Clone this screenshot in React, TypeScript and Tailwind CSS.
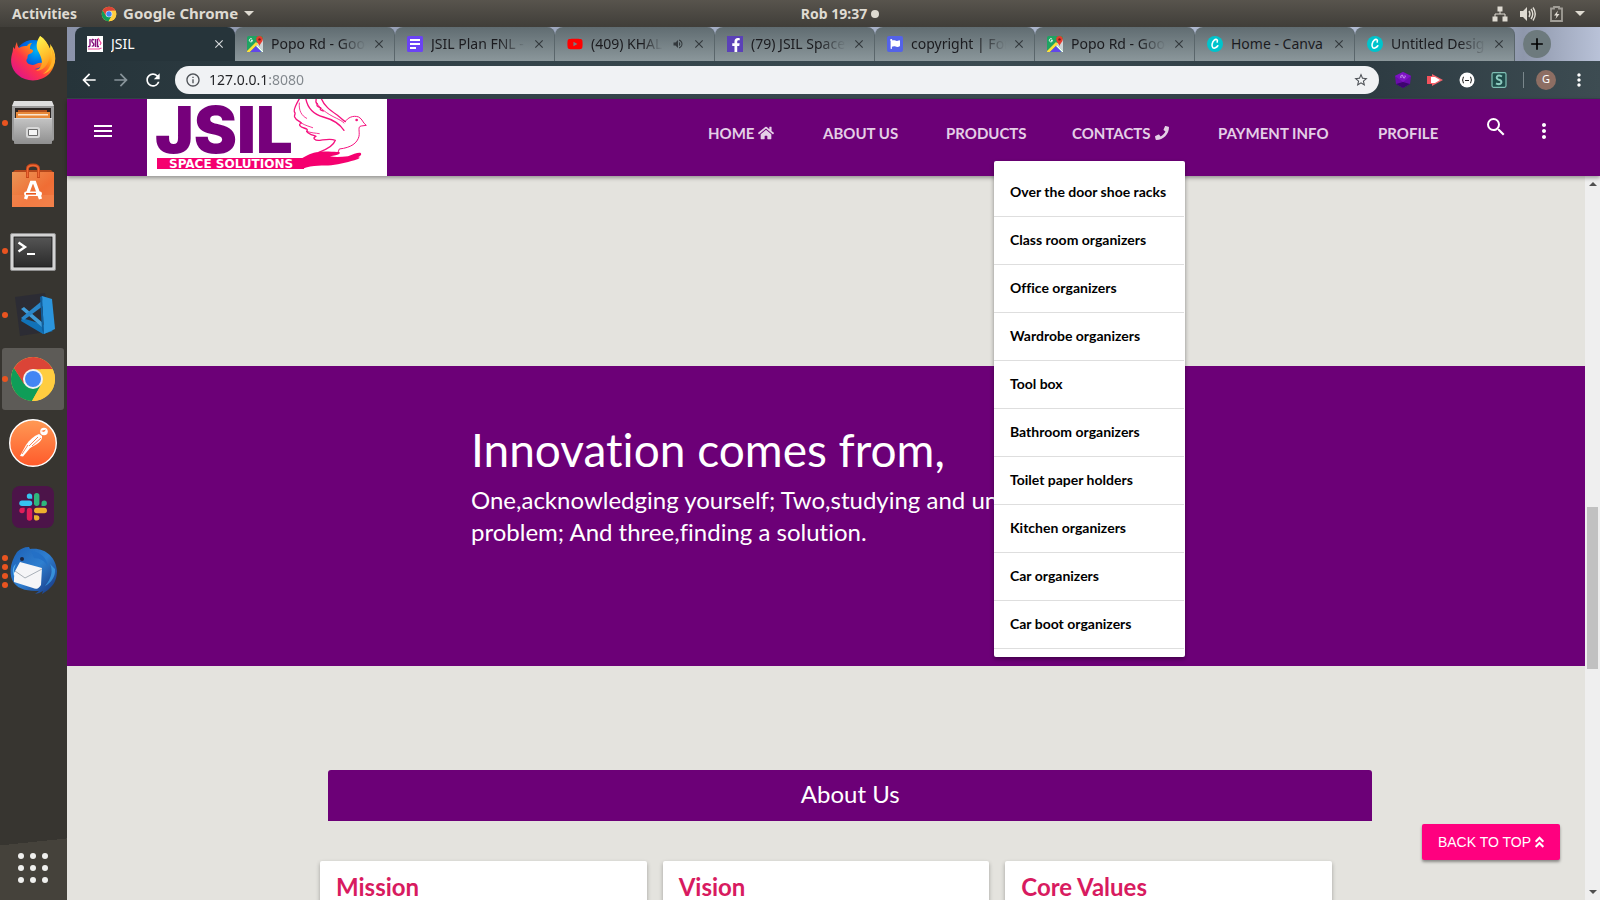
import type { ReactNode } from "react";
import { FaAngleDoubleUp, FaFacebookF, FaFlag, FaHome, FaPhone, FaYoutube } from "react-icons/fa";
import {
  MdAdd,
  MdArrowBack,
  MdArrowForward,
  MdClose,
  MdInfoOutline,
  MdMenu,
  MdMoreVert,
  MdRefresh,
  MdSearch,
  MdStarBorder,
  MdVolumeUp,
} from "react-icons/md";

/* ---------- Shared drawings ---------- */

function ChromeIcon({ className }: { className: string }) {
  return (
    <svg viewBox="0 0 48 48" className={className} aria-hidden="true">
      <circle cx="24" cy="24" r="22" fill="#ffcd40" />
      <path d="M4.95 13 A22 22 0 0 0 23 46 L32.5 29 L24 24 L15.5 29 Z" fill="#0f9d58" />
      <path d="M4.95 13 A22 22 0 0 1 43.7 14.2 L24 14.2 L15 29 Z" fill="#db4437" />
      <path d="M43.7 14.2 A22 22 0 0 1 23 46 L32.5 29 L32 14.2 Z" fill="#ffcd40" />
      <circle cx="24" cy="24" r="10" fill="#f1f1f1" />
      <circle cx="24" cy="24" r="8" fill="#4285f4" />
    </svg>
  );
}

function FirefoxIcon() {
  return (
    <svg viewBox="0 0 48 48" className="size-12" aria-hidden="true">
      <defs>
        <linearGradient id="ffBody" x1="0.9" y1="0.1" x2="0.15" y2="0.9">
          <stop offset="0" stopColor="#fff44f" />
          <stop offset="0.35" stopColor="#ff980e" />
          <stop offset="0.65" stopColor="#ff3647" />
          <stop offset="1" stopColor="#e31587" />
        </linearGradient>
        <linearGradient id="ffTail" x1="0.3" y1="0" x2="0.6" y2="1">
          <stop offset="0" stopColor="#fff44f" />
          <stop offset="0.6" stopColor="#ffbd2a" />
          <stop offset="1" stopColor="#ff8a1e" />
        </linearGradient>
        <radialGradient id="ffGlobe" cx="0.6" cy="0.3" r="0.8">
          <stop offset="0" stopColor="#00b3f4" />
          <stop offset="0.5" stopColor="#0060df" />
          <stop offset="1" stopColor="#2b2a8c" />
        </radialGradient>
      </defs>
      <circle cx="24" cy="23" r="18" fill="url(#ffGlobe)" />
      <path
        d="M8 7 C8 10 9 12 10 13 C13 11 16 11 18 11 C19 9 21 8 23 8 C21 10 21 12 21 14 C23 14 24 15 24 16 C24 18 20 19 19 20 C18 22 19 23 18 24 C16 26 19 30 24 30 C27 30 29 27 33 28 C38 29 30 34 25 34 C36 36 40 26 35 16 C33 12 32 6 31 1 C37 5 39 11 41 14 C42 13 42 11 41 9 C48 17 48 29 41 38 C33 47 18 48 9 40 C2 34 1 26 3 19 C4 16 4 14 4 12 C5 13 6 14 6 14 C6 11 7 9 8 7 Z"
        fill="url(#ffBody)"
      />
      <path
        d="M31 1 C27 7 27 12 29 16 C33 23 36 31 27 36 C38 35 40 26 42 17 C42 13 42 11 41 9 C41 11 41 13 41 14 C39 9 36 4 31 1 Z"
        fill="url(#ffTail)"
      />
      <path d="M42 13 C45 22 43 33 34 39 C42 37 47 29 46 22 C45 18 44 15 42 13 Z" fill="#ffb32a" />
    </svg>
  );
}

function FilesIcon() {
  return (
    <svg viewBox="0 0 48 48" className="size-12" aria-hidden="true">
      <defs>
        <linearGradient id="cabinet" x1="0" y1="0" x2="0" y2="1">
          <stop offset="0" stopColor="#c4c4c4" />
          <stop offset="1" stopColor="#8f8f8f" />
        </linearGradient>
      </defs>
      <rect x="3" y="6" width="42" height="36" rx="2" fill="#9c9c9c" />
      <path d="M5 2 H43 L45 7 H3 Z" fill="#dedede" />
      <rect x="6" y="9" width="36" height="12" fill="#2b2523" />
      <rect x="9" y="11" width="29" height="4" fill="#b5521f" />
      <rect x="7" y="13" width="34" height="7" fill="#e8893a" />
      <rect x="9" y="15" width="30" height="1.5" fill="#fbe6cf" />
      <rect x="5" y="19" width="38" height="26" rx="1" fill="url(#cabinet)" />
      <rect x="5" y="19" width="38" height="1" fill="#dadada" />
      <rect x="17" y="28" width="14" height="11" rx="2.5" fill="#d8d8d8" />
      <rect x="19" y="30" width="10" height="7" rx="1" fill="#6d6d6d" />
      <rect x="20" y="31" width="8" height="5" fill="#f4f4f4" />
    </svg>
  );
}

function SoftwareIcon() {
  return (
    <svg viewBox="0 0 48 48" className="size-12" aria-hidden="true">
      <defs>
        <linearGradient id="bag" x1="0" y1="0" x2="1" y2="1">
          <stop offset="0" stopColor="#eb9556" />
          <stop offset="0.6" stopColor="#f06d34" />
          <stop offset="1" stopColor="#f07a45" />
        </linearGradient>
      </defs>
      <path d="M4 9 L6 7 H42 L44 9 Z" fill="#b5481c" />
      <rect x="3" y="9" width="42" height="35" fill="url(#bag)" />
      <rect x="3" y="32" width="42" height="12" fill="#f3854f" opacity="0.6" />
      <path d="M18.5 15 V6 Q18.5 2 24 2 Q29.5 2 29.5 6 V15" fill="none" stroke="#c9471b" strokeWidth="3" />
      <path d="M18.5 14 V6 Q18.5 2.5 24 2.5 Q29.5 2.5 29.5 6 V14" fill="none" stroke="#ee6a35" strokeWidth="1.3" />
      <path d="M16.5 36 L22.5 19.5 H25.5 L31.5 36" fill="none" stroke="#fff" strokeWidth="3.4" />
      <rect x="15" y="28.5" width="18" height="4.5" rx="2.2" fill="#fff" />
      <rect x="17" y="30" width="10" height="1.6" fill="#e9581c" />
    </svg>
  );
}

function TerminalIcon() {
  return (
    <svg viewBox="0 0 48 48" className="size-12" aria-hidden="true">
      <defs>
        <linearGradient id="screen" x1="0" y1="0" x2="0" y2="1">
          <stop offset="0" stopColor="#555" />
          <stop offset="1" stopColor="#2a2a2a" />
        </linearGradient>
      </defs>
      <rect x="1.5" y="6.5" width="45" height="37" rx="1.5" fill="#d3d3d3" stroke="#8e8e8e" />
      <rect x="4" y="9" width="40" height="32" fill="#f0f0f0" />
      <rect x="5" y="10" width="38" height="30" fill="url(#screen)" stroke="#1c1c1c" />
      <path d="M9.5 15.5 L16 20 L9.5 24.5" fill="none" stroke="#fff" strokeWidth="2.4" />
      <path d="M18 27 H26" stroke="#fff" strokeWidth="2" />
    </svg>
  );
}

function CodeIcon() {
  return (
    <svg viewBox="0 0 48 48" className="size-12" aria-hidden="true">
      <path d="M6 6 L36 2 L43 40 L11 45 Z" fill="#2c2c34" />
      <path d="M13 27 L33 33 L44 40 L34 43 L12 30 Z" fill="#1172b8" />
      <path d="M12 18 L15 16 L34 32 V37 Z" fill="#3f9bd8" />
      <path d="M12 27 L34 9 V15 L15 29 Z" fill="#2a86c9" />
      <path d="M33 5 L43 8 L46 38 L35 43 Z" fill="#2b95dd" />
      <path d="M33 5 L35 43 L33 39 L31 6 Z" fill="#115e9c" />
    </svg>
  );
}

function PostmanIcon() {
  return (
    <svg viewBox="0 0 48 48" className="size-12" aria-hidden="true">
      <defs>
        <linearGradient id="postman" x1="0" y1="0" x2="0" y2="1">
          <stop offset="0" stopColor="#ff9a55" />
          <stop offset="1" stopColor="#ff5a2b" />
        </linearGradient>
      </defs>
      <circle cx="24" cy="24" r="23.3" fill="url(#postman)" stroke="#fff" strokeWidth="1.4" />
      <circle cx="35" cy="12.5" r="3.8" fill="#fff" />
      <path d="M32 12 L37 10.5 L35 13 Z" fill="#ff7d44" />
      <path d="M30 15 C25 17 20 21 17 26 L21 29 C27 26 34 22 33 17 Z" fill="#fff" />
      <path d="M17 26 L11 37 L14 37.5 L22 28 Z" fill="#fff" />
      <path d="M29 18 L20 27 M32 19 L23 27 M19 26 L13 35" stroke="#ff7540" strokeWidth="0.9" />
    </svg>
  );
}

function SlackIcon() {
  return (
    <svg viewBox="0 0 48 48" className="size-12" aria-hidden="true">
      <rect x="3" y="3" width="42" height="42" rx="8" fill="#4c1449" />
      <g strokeWidth="5.4" strokeLinecap="round">
        <path d="M13 20.3 H20.5" stroke="#36c5f0" />
        <path d="M27.7 12.7 V20.3" stroke="#2eb67d" />
        <path d="M20.5 27.5 V35" stroke="#e01e5a" />
        <path d="M27.7 27.5 H35.3" stroke="#ecb22e" />
      </g>
      <path d="M23.2 15.8 H20.5 A2.7 2.7 0 1 1 23.2 13 Z" fill="#36c5f0" />
      <path d="M32.5 23 V20.3 A2.7 2.7 0 1 1 35.3 23 Z" fill="#2eb67d" />
      <path d="M15.7 24.8 V27.5 A2.7 2.7 0 1 1 13 24.8 Z" fill="#e01e5a" />
      <path d="M25 32.2 H27.7 A2.7 2.7 0 1 1 25 35 Z" fill="#ecb22e" />
    </svg>
  );
}

function ThunderbirdIcon() {
  return (
    <svg viewBox="0 0 48 48" className="size-12" aria-hidden="true">
      <defs>
        <linearGradient id="bird" x1="0" y1="0" x2="1" y2="1">
          <stop offset="0" stopColor="#1c5fb5" />
          <stop offset="0.5" stopColor="#2f7fd0" />
          <stop offset="1" stopColor="#16317c" />
        </linearGradient>
      </defs>
      <path
        d="M8 5 C11 2 15 0 20 0 L21 2 C36 0 47 10 48 24 C48 30 46 37 41 41 L39 43 L33 47 C33 46 34 45 34 44 L30 46 L26 47 L30 44 C20 44 10 43 5 36 C0 29 0 17 8 5 Z"
        fill="url(#bird)"
      />
      <path d="M22 4 C32 5 38 11 39 20 C36 14 31 11 25 11 Z" fill="#2470c6" />
      <path d="M41 17 C44 23 43 31 36 39 C42 36 47 29 46 22 Z" fill="#3fa6ee" opacity="0.7" />
      <path d="M5 26 L11 15 L33 21 L32 38 C29 43 26 42 24 41 L5 35 Z" fill="#f5f5f7" />
      <path d="M6 24 L16 31 L33 22" fill="none" stroke="#a9b0b8" strokeWidth="1" />
      <circle cx="13" cy="12" r="2" fill="#1d2540" />
      <path d="M7 17 C5 21 4 26 6 31 C3 26 3 20 7 17 Z" fill="#5bb8f5" />
    </svg>
  );
}

function MapsIcon() {
  return (
    <svg viewBox="0 0 16 16" className="size-4 shrink-0" aria-hidden="true">
      <rect width="16" height="16" rx="1.5" fill="#1fa463" />
      <path d="M16 3 L16 15 L9 8 Z" fill="#cfd3d6" />
      <path d="M0 15 L9 6 L11 8 L3 16 H0 Z" fill="#ffe03a" />
      <path d="M3 16 L9 10 L14.5 16 Z" fill="#6246ea" />
      <path d="M10 9 L16 15 V16 H15 L9 10 Z" fill="#fff" />
      <path d="M12.5 10.5 C12.2 7.5 9.2 6.3 9.2 3.3 A3.3 3.3 0 0 1 15.8 3.3 C15.8 6.3 12.8 7.5 12.5 10.5 Z" fill="#e53c2e" />
      <circle cx="12.5" cy="3.4" r="1.2" fill="#7b1712" />
      <path d="M5.2 3.3 A1.6 1.6 0 1 0 5.5 4.5 H4" fill="none" stroke="#fff" strokeWidth="0.9" />
    </svg>
  );
}

function DocsIcon() {
  return (
    <svg viewBox="0 0 16 16" className="size-4 shrink-0" aria-hidden="true">
      <rect width="16" height="16" rx="1.5" fill="#6b43f5" />
      <path d="M3 4 H13 M3 8 H13 M3 12 H9" stroke="#fff" strokeWidth="1.8" />
    </svg>
  );
}

function CanvaIcon() {
  return (
    <svg viewBox="0 0 16 16" className="size-4 shrink-0" aria-hidden="true">
      <circle cx="8" cy="8" r="8" fill="#00c4cc" />
      <path
        d="M10.2 6 C11.2 3.4 8.8 2.6 7.2 4.2 C5 6.3 4.3 10.2 5.8 11.6 C7.3 12.8 9.6 11.7 10.8 9.8"
        fill="none"
        stroke="#fff"
        strokeWidth="1.6"
        strokeLinecap="round"
      />
    </svg>
  );
}

function DoveAndHand() {
  return (
    <g transform="translate(-7 -4) scale(0.3333)">
      <g fill="none" stroke="#f5127f" strokeWidth="4" strokeLinecap="round" strokeLinejoin="round">
        <path d="M480 8 C470 25 458 45 464 52 C468 56 462 60 464 66 C468 76 478 78 484 84 C474 88 480 96 492 99 C502 102 504 104 500 109 C506 118 518 120 528 124 C516 128 524 138 540 136 C556 134 572 130 586 136 C580 154 560 164 536 172" />
        <path d="M478 24 C476 46 484 62 500 70 M484 84 C496 92 508 94 518 98 M500 109 C514 114 526 114 538 116" strokeWidth="2.5" />
        <path d="M497 8 C502 40 520 58 550 66 C580 74 600 88 612 106" />
        <path d="M528 8 C530 18 524 24 532 26 C528 34 536 36 542 38 C538 46 546 46 550 48" />
        <path d="M543 8 C552 34 574 48 594 62 C604 70 610 76 616 80" />
        <path d="M529 22 C540 40 560 56 590 70 C600 75 606 78 612 84" strokeWidth="2.5" />
        <path d="M616 80 C622 68 640 60 656 66 C668 72 668 84 679 91 L664 93 C652 94 660 110 657 124 C652 144 634 158 598 162 L594 172" strokeWidth="3" />
      </g>
      <circle cx="650" cy="75" r="4" fill="#f5127f" />
      <path
        d="M486 190 C500 182 516 172 536 171 C560 168 580 172 598 171 C602 176 598 180 570 184 C586 188 604 186 624 184 C640 178 654 172 662 174 C666 178 662 184 652 187 C662 186 660 190 652 193 C630 200 600 208 574 211 C550 214 520 208 486 222 Z"
        fill="#f5006f"
      />
    </g>
  );
}

/* ---------- Desktop chrome ---------- */

function TopBar() {
  return (
    <header className="grid h-[27px] shrink-0 grid-cols-[1fr_auto_1fr] items-center bg-linear-to-b from-[#58544d] to-[#403e39] text-[14px] font-bold text-[#dfdbd2]">
      <div className="flex items-center">
        <button type="button" className="pl-3">Activities</button>
        <button type="button" className="flex items-center gap-[6px] pl-6 text-[15px]">
          <ChromeIcon className="size-4" />
          Google Chrome
          <svg viewBox="0 0 10 5" className="h-[5px] w-[10px]" aria-hidden="true">
            <path d="M0 0 H10 L5 5 Z" fill="#dfdbd2" />
          </svg>
        </button>
      </div>
      <button type="button" className="flex items-center gap-1 pl-20">
        Rob 19:37
        <span className="size-2 rounded-full bg-[#dfdbd2]" />
      </button>
      <div className="flex items-center justify-end pr-[15px]">
        <svg viewBox="0 0 80 16" className="mr-[3px] h-4 w-20" aria-hidden="true">
          <path d="M5.5 0.5 h5 v5 h-5 z M0.5 10.5 h5 v5 h-5 z M10.5 10.5 h5 v5 h-5 z" fill="#dfdbd2" />
          <path d="M8 5 V8 M3 11 V8 H13 V11" fill="none" stroke="#dfdbd2" />
          <path d="M28 5 H31 L35 1 V15 L31 11 H28 Z" fill="#dfdbd2" />
          <path d="M37 5 Q39 8 37 11 M39 3 Q42.5 8 39 13 M41 1.5 Q45.5 8 41 14.5" fill="none" stroke="#dfdbd2" strokeWidth="1.4" />
          <path d="M59 2.5 H62 V1 H67 V2.5 H70 V15 H59 Z" fill="none" stroke="#a19e97" strokeWidth="1.8" />
          <path d="M66 4.5 L62 9.5 H64.5 L63.5 13 L67.5 8 H65 Z" fill="#dfdbd2" />
        </svg>
        <svg viewBox="0 0 10 5" className="h-[5px] w-[10px]" aria-hidden="true">
          <path d="M0 0 H10 L5 5 Z" fill="#dfdbd2" />
        </svg>
      </div>
    </header>
  );
}

const dockApps: { name: string; icon: ReactNode; windows: number; active?: boolean }[] = [
  { name: "Firefox", icon: <FirefoxIcon />, windows: 0 },
  { name: "Files", icon: <FilesIcon />, windows: 1 },
  { name: "Ubuntu Software", icon: <SoftwareIcon />, windows: 0 },
  { name: "Terminal", icon: <TerminalIcon />, windows: 1 },
  { name: "Visual Studio Code", icon: <CodeIcon />, windows: 1 },
  { name: "Google Chrome", icon: <ChromeIcon className="size-12" />, windows: 1, active: true },
  { name: "Postman", icon: <PostmanIcon />, windows: 0 },
  { name: "Slack", icon: <SlackIcon />, windows: 0 },
  { name: "Thunderbird", icon: <ThunderbirdIcon />, windows: 4 },
];

function Dock() {
  return (
    <nav
      aria-label="Dock"
      className="flex w-[67px] shrink-0 flex-col bg-[#373530] bg-[linear-gradient(174deg,transparent_93%,#45423b_93%)]"
    >
      {dockApps.map((app) => (
        <div key={app.name} className="flex h-16 items-center pl-[2px]">
          <button
            type="button"
            aria-label={app.name}
            className={`relative flex h-[62px] w-[62px] items-center justify-center rounded-[3px] ${app.active ? "bg-[#5d5b57]" : ""}`}
          >
            {app.icon}
            <span className="absolute inset-y-0 left-0 flex flex-col justify-center gap-[3px]">
              {Array.from({ length: app.windows }, (_, i) => (
                <span key={i} className="size-[6px] rounded-full bg-[#e95420]" />
              ))}
            </span>
          </button>
        </div>
      ))}
      <button type="button" aria-label="Show Applications" className="mt-auto flex h-16 items-center justify-center pr-[2px]">
        <span className="grid grid-cols-3 gap-[6px]">
          {Array.from({ length: 9 }, (_, i) => (
            <span key={i} className="size-[6px] rounded-full bg-[#f0f0ee]" />
          ))}
        </span>
      </button>
    </nav>
  );
}

/* ---------- Browser ---------- */

const mapsTab = { title: "Popo Rd - Goog", icon: <MapsIcon /> };

const tabs: { title: string; icon: ReactNode; active?: boolean; audio?: boolean; fits?: boolean }[] = [
  {
    title: "JSIL",
    active: true,
    fits: true,
    icon: (
      <svg viewBox="0 0 16 16" className="size-4 shrink-0" aria-hidden="true">
        <rect width="16" height="16" fill="#fff" />
        <path d="M3 3 V9 Q3 11 1 10.5 M7 4 Q5 2.5 4.8 5 Q5 6.5 6.5 7.5 Q7.5 10.5 4.8 10 M8.5 3 V11 M10.5 3 V10.5 H12" fill="none" stroke="#85107c" strokeWidth="1.4" />
        <path d="M11 2 L14 7 L13 9 M1 13 H12 L14.5 12" fill="none" stroke="#f0459a" strokeWidth="1.2" />
      </svg>
    ),
  },
  mapsTab,
  { title: "JSIL Plan FNL -", icon: <DocsIcon /> },
  { title: "(409) KHAL", icon: <FaYoutube className="size-4 shrink-0 text-[#f00]" />, audio: true },
  {
    title: "(79) JSIL Space",
    icon: (
      <span className="flex size-4 shrink-0 items-end justify-end bg-[#5b41b8] text-white">
        <FaFacebookF className="size-[14px]" />
      </span>
    ),
  },
  {
    title: "copyright | Fon",
    icon: (
      <span className="flex size-4 shrink-0 items-center justify-center rounded-[2px] bg-[#5463e8] text-white">
        <FaFlag className="size-[10px]" />
      </span>
    ),
  },
  mapsTab,
  { title: "Home - Canva", icon: <CanvaIcon />, fits: true },
  { title: "Untitled Desig", icon: <CanvaIcon /> },
];

function TabStrip() {
  return (
    <div className="flex h-[34px] shrink-0 items-stretch bg-[linear-gradient(to_right,#8b93aa,#a3adc4_40%,#b3bdd4_90%,#8e97ab_95%,#b9c2d8)] pl-2 pr-[49px]">
      {tabs.map((tab, i) => (
        <div
          key={i}
          className={`flex min-w-0 flex-1 items-center rounded-t-lg border-r pl-3 pr-2 ${
            tab.active
              ? "border-[#26343a] bg-[#26343a] text-white"
              : "border-[#5a666b] bg-linear-to-b from-[#606c71] to-[#8b979b] text-[#1b1b1f]"
          }`}
        >
          {tab.icon}
          <button
            type="button"
            className={`ml-2 min-w-0 flex-1 overflow-hidden whitespace-nowrap text-left text-[14px] leading-5 ${
              tab.fits ? "" : "[mask-image:linear-gradient(to_right,#000_70%,transparent_98%)]"
            }`}
          >
            {tab.title}
          </button>
          {tab.audio && <MdVolumeUp className="ml-2 mr-1 size-3 shrink-0 text-[#33393d]" />}
          <button type="button" aria-label="Close tab" className={`ml-1 shrink-0 ${tab.active ? "text-[#d5d8da]" : "text-[#33393d]"}`}>
            <MdClose className="size-[14px]" />
          </button>
        </div>
      ))}
      <button
        type="button"
        aria-label="New tab"
        className="ml-2 flex size-7 shrink-0 items-center justify-center self-center rounded-full bg-[#6d7a7d] text-black"
      >
        <MdAdd className="size-5" />
      </button>
    </div>
  );
}

function Toolbar() {
  return (
    <div className="flex h-[38px] shrink-0 items-center border-b border-[#36464a] bg-[linear-gradient(to_right,#26343a,#34444a_30%,#3b4b51_60%,#2d3b42_85%,#3d4c52)] pr-[5px] text-white">
      <button type="button" aria-label="Back" className="ml-[6px] flex size-8 items-center justify-center">
        <MdArrowBack className="size-5" />
      </button>
      <button type="button" aria-label="Forward" className="flex size-8 items-center justify-center text-[#88949a]">
        <MdArrowForward className="size-5" />
      </button>
      <button type="button" aria-label="Reload" className="flex size-8 items-center justify-center">
        <MdRefresh className="size-5" />
      </button>
      <div className="ml-[6px] flex h-7 flex-1 items-center rounded-full bg-[#f0f2f4] px-[10px] text-[#4d5156]">
        <MdInfoOutline className="size-4" />
        <label htmlFor="address" className="sr-only">Address</label>
        <input
          id="address"
          type="text"
          defaultValue="127.0.0.1:8080"
          className="ml-2 min-w-0 flex-1 bg-[linear-gradient(to_right,#202124_60px,#80868b_60px)] bg-clip-text text-[14px] leading-5 text-transparent outline-none"
        />
        <button type="button" aria-label="Bookmark this page">
          <MdStarBorder className="size-4" />
        </button>
      </div>
      <div className="ml-2 flex items-center">
        <button type="button" aria-label="Gem extension" className="flex size-8 items-center justify-center">
          <svg viewBox="0 0 16 16" className="size-4" aria-hidden="true">
            <path d="M8 0 L16 4 L15 12 L8 16 L1 12 L0 4 Z" fill="#6a0dab" />
            <path d="M8 0 L16 4 L8 10 L0 4 Z" fill="#7d12c4" />
            <path d="M8 10 L15 12 L8 16 L1 12 Z" fill="#3d0570" />
            <path d="M6 6 C5 3 8 2 8 4.5 C8 7 11 6 10 3.5" fill="none" stroke="#e4c6ff" strokeWidth="0.8" />
          </svg>
        </button>
        <button type="button" aria-label="Record extension" className="flex size-8 items-center justify-center">
          <svg viewBox="0 0 16 16" className="size-4" aria-hidden="true">
            <rect x="0" y="4" width="9" height="8" fill="#f4525c" />
            <path d="M5 2 L16 8 L5 14 Z" fill="#f4646c" />
            <path d="M4 5 H8 L13 8 L8 11 H4 Z" fill="#fff" />
          </svg>
        </button>
        <button type="button" aria-label="JSON extension" className="flex size-8 items-center justify-center">
          <svg viewBox="0 0 16 16" className="size-4" aria-hidden="true">
            <circle cx="8" cy="8" r="7.5" fill="#fff" />
            <path d="M5 5 Q3.5 5 4 7 Q4 8 3 8 Q4 8 4 9 Q3.5 11 5 11 M11 5 Q12.5 5 12 7 Q12 8 13 8 Q12 8 12 9 Q12.5 11 11 11 M6 8.5 H10" fill="none" stroke="#222" />
          </svg>
        </button>
        <button type="button" aria-label="Stylus extension" className="flex size-8 items-center justify-center">
          <svg viewBox="0 0 16 16" className="size-4" aria-hidden="true">
            <rect x="1" y="0.7" width="14" height="14.6" rx="1.5" fill="#1f4a49" stroke="#7fc0b5" strokeWidth="1.2" />
            <path d="M11 4.5 Q7.5 2.5 6 4.5 Q5 7 8 7.8 Q11.5 9 10 11.2 Q8 13 5 11.3" fill="none" stroke="#8ccabf" strokeWidth="2" />
          </svg>
        </button>
        <span className="mx-2 h-4 w-px bg-[#7a878c]" />
        <button type="button" aria-label="Profile" className="ml-1 mr-[7px] flex size-5 items-center justify-center rounded-full bg-[#8d6e63] text-[11px] text-white">
          G
        </button>
        <button type="button" aria-label="Browser menu" className="flex size-8 items-center justify-center">
          <MdMoreVert className="size-5" />
        </button>
      </div>
    </div>
  );
}

/* ---------- Site ---------- */

const products = [
  "Over the door shoe racks",
  "Class room organizers",
  "Office organizers",
  "Wardrobe organizers",
  "Tool box",
  "Bathroom organizers",
  "Toilet paper holders",
  "Kitchen organizers",
  "Car organizers",
  "Car boot organizers",
];

const links: { label: string; icon?: ReactNode; width: string }[] = [
  { label: "HOME", icon: <FaHome className="size-4" />, width: "w-[115px]" },
  { label: "ABOUT US", width: "w-[123px]" },
  { label: "PRODUCTS", width: "w-[126px]" },
  { label: "CONTACTS", icon: <FaPhone className="size-[14px]" />, width: "w-[146px]" },
  { label: "PAYMENT INFO", width: "w-[160px]" },
  { label: "PROFILE", width: "w-[110px]" },
];

function SiteNav() {
  return (
    <nav className="relative z-10 flex h-[77px] shrink-0 items-start bg-[#6c0077] pr-10 text-white shadow-[0_2px_4px_rgba(0,0,0,0.35)]">
      <button type="button" aria-label="Open menu" className="ml-6 flex h-16 items-center">
        <MdMenu className="size-6" />
      </button>
      <a href="#home" aria-label="JSIL Space Solutions" className="ml-8">
        <svg viewBox="0 0 240 77" className="block h-[77px] w-[240px]">
          <rect width="240" height="77" fill="#fff" />
          <text x="8" y="54" fontSize="65" fontWeight="900" fill="#76007b" className="font-['Inter',sans-serif]">
            JSIL
          </text>
          <rect x="10" y="59" width="147" height="11" fill="#f5006f" />
          <DoveAndHand />
          <text x="22" y="69" fontSize="12" fontWeight="700" fill="#fff" className="font-['DejaVu_Sans',sans-serif]">
            SPACE SOLUTIONS
          </text>
        </svg>
      </a>
      <ul className="ml-auto flex text-[15px] font-bold text-[#e4cfe6]">
        {links.map((link) => (
          <li key={link.label} className={`relative ${link.width}`}>
            <a href="#section" className="flex h-16 items-center gap-1 whitespace-nowrap pl-6 pt-1">
              {link.label}
              {link.icon}
            </a>
            {link.label === "PRODUCTS" && (
              <ul className="absolute left-[72px] top-[62px] w-[191px] rounded-[2px] bg-white py-2 pr-px text-[14px] text-black shadow-[0_2px_4px_rgba(0,0,0,0.4)]">
                {products.map((product) => (
                  <li key={product} className="border-b border-[#dedede]">
                    <a href="#products" className="flex h-[47px] items-center whitespace-nowrap pb-[2px] pl-4">
                      {product}
                    </a>
                  </li>
                ))}
              </ul>
            )}
          </li>
        ))}
      </ul>
      <button type="button" aria-label="Search" className="flex h-14 w-16 items-center justify-center">
        <MdSearch className="size-6" />
      </button>
      <button type="button" aria-label="More" className="flex h-16 w-8 items-center justify-center">
        <MdMoreVert className="size-6" />
      </button>
    </nav>
  );
}

function SiteContent() {
  return (
    <main className="relative min-w-0 flex-1 overflow-hidden bg-[#e4e3de] pt-[190px]">
      <section className="h-[300px] bg-[#6c0077] pl-[404px] pt-[54px] text-white">
        <h1 className="text-[46px] leading-[60px]">Innovation comes from,</h1>
        <p className="mt-1 text-[24px] leading-8">
          One,acknowledging yourself; Two,studying and understanding the
          <br />
          problem; And three,finding a solution.
        </p>
      </section>
      <h2 className="ml-[17.2%] mt-[104px] h-[51px] w-[68.8%] rounded-t-[3px] bg-[#6c0077] text-center text-[24px] leading-[48px] text-white">
        About Us
      </h2>
      <div className="mx-auto mt-10 grid w-2/3 grid-cols-3 gap-4">
        {["Mission", "Vision", "Core Values"].map((title) => (
          <article key={title} className="h-40 rounded-[2px] bg-white px-4 pt-[10px] shadow-[0_2px_4px_rgba(0,0,0,0.3)]">
            <h3 className="text-[24px] font-bold leading-8 text-[#d81b60]">{title}</h3>
          </article>
        ))}
      </div>
      <button
        type="button"
        className="absolute bottom-10 right-[25px] flex h-9 items-center gap-1 rounded-[2px] bg-[#ff007f] px-4 font-['Liberation_Sans',sans-serif] text-[14px] text-white shadow-[0_2px_3px_rgba(0,0,0,0.4)]"
      >
        BACK TO TOP
        <FaAngleDoubleUp className="h-[14px] w-[9px]" />
      </button>
    </main>
  );
}

function ScrollTrack() {
  return (
    <div className="flex w-[15px] shrink-0 flex-col items-center bg-[#efefef] py-[6px]" aria-hidden="true">
      <svg viewBox="0 0 8 4" className="h-1 w-2"><path d="M0 4 L4 0 L8 4 Z" fill="#505050" /></svg>
      <span className="grow-[321]" />
      <span className="w-[11px] grow-[162] bg-[#c1c1c1]" />
      <span className="grow-[221]" />
      <svg viewBox="0 0 8 4" className="h-1 w-2"><path d="M0 0 L4 4 L8 0 Z" fill="#505050" /></svg>
    </div>
  );
}

export default function App() {
  return (
    <div className="flex h-screen flex-col overflow-hidden font-['Noto_Sans',sans-serif]">
      <TopBar />
      <div className="flex min-h-0 flex-1">
        <Dock />
        <div className="flex min-w-0 flex-1 flex-col">
          <TabStrip />
          <Toolbar />
          <div className="flex min-h-0 flex-1 flex-col font-['Lato',sans-serif] [font-variant-ligatures:none]">
            <SiteNav />
            <div className="flex min-h-0 flex-1">
              <SiteContent />
              <ScrollTrack />
            </div>
          </div>
        </div>
      </div>
    </div>
  );
}
